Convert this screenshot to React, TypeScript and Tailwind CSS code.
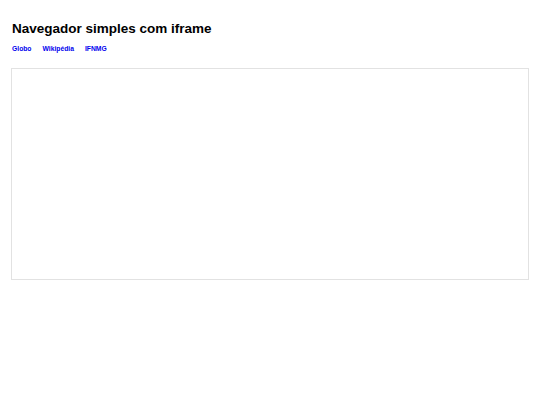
export default function App() {
  const links = ["Globo", "Wikipédia", "IFNMG"];

  return (
    <main className="min-h-screen bg-white px-[11px] pt-[21px] font-['Liberation_Sans',Arial,sans-serif]">
      <h1 className="pl-px text-[13.5px] leading-[16px] font-bold text-black">Navegador simples com iframe</h1>
      <nav className="mt-[8px] flex gap-[11px] pl-px text-[6.75px] leading-[8px] font-bold">
        {links.map((l) => (
          <a key={l} href="#" className="text-[#0000ee]">
            {l}
          </a>
        ))}
      </nav>
      <div className="mt-[15px] h-[212px] w-full border border-[#e2e2e2] bg-white" />
    </main>
  );
}
